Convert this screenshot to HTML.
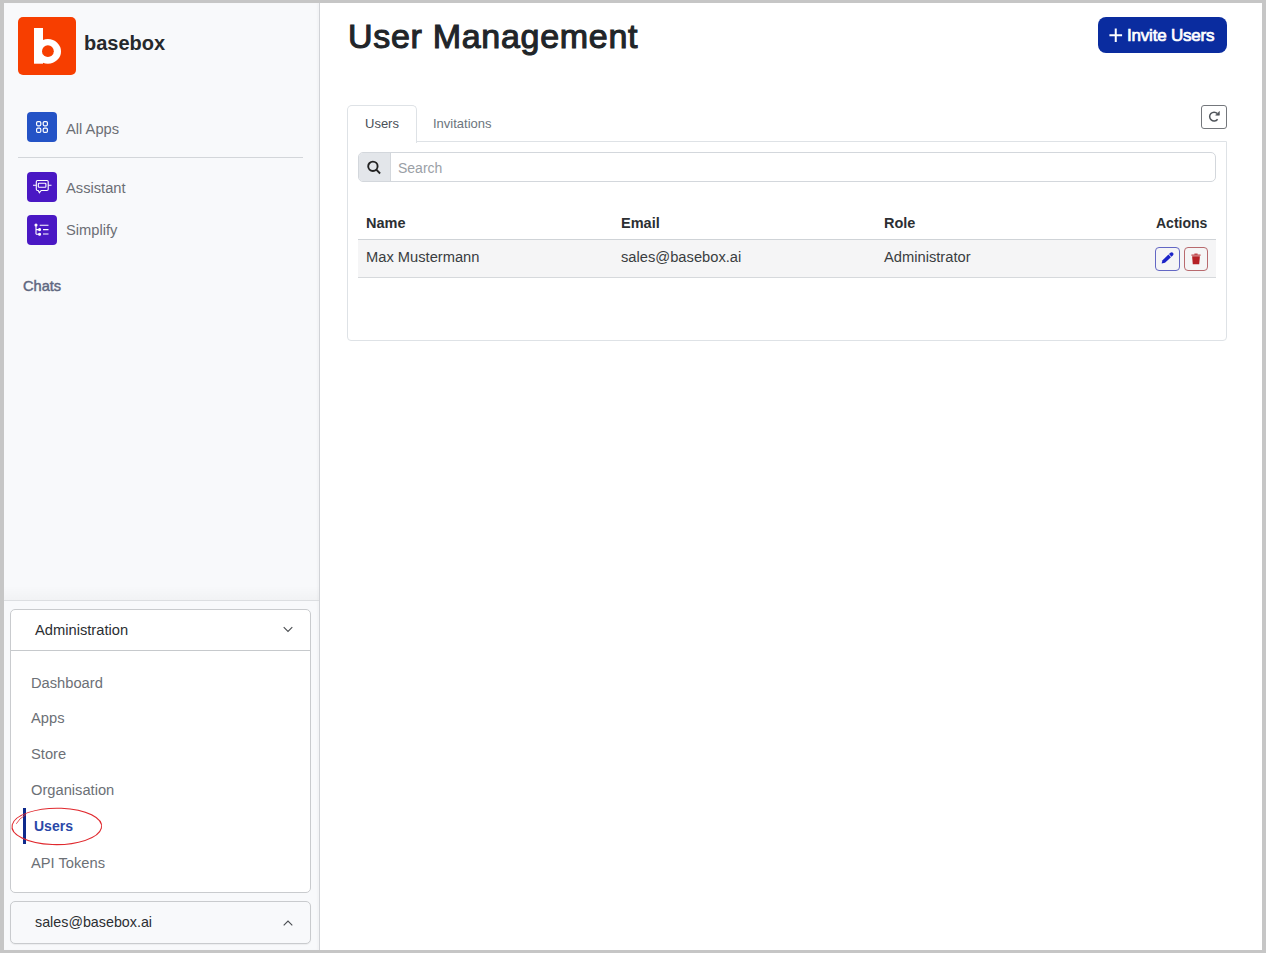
<!DOCTYPE html>
<html><head><meta charset="utf-8">
<style>
*{box-sizing:border-box;margin:0;padding:0}
html,body{width:1266px;height:953px;overflow:hidden;background:#c6c6c6;font-family:"Liberation Sans",sans-serif}
.a{position:absolute}
.t{position:absolute;white-space:nowrap;line-height:1}
#frame{left:4px;top:3px;width:1258px;height:947px;background:#fff}
#side{left:4px;top:3px;width:316px;height:947px;background:#f8f9fb;border-right:1px solid #d1d3d7;box-shadow:inset -2px 0 2px rgba(0,0,0,0.025)}
.logo{left:18px;top:17px;width:58px;height:58px;background:#f73e00;border-radius:5px}
.brand{left:84px;top:33px;font-size:20px;font-weight:700;color:#26292d}
.ai{width:30px;height:30px;border-radius:4px}
.nav{font-size:14.7px;color:#6c6f75}
.box{left:10px;width:301px;border:1px solid #c9cbce;border-radius:5px}
.mi{font-size:14.7px;color:#6c7076}
.title{left:348px;top:19px;font-size:34px;font-weight:400;color:#212529;-webkit-text-stroke:1.1px #212529;letter-spacing:0.7px}
.btn{left:1098px;top:17px;width:129px;height:36px;background:#0a2c9f;border-radius:8px}
.panel{left:347px;top:141px;width:880px;height:200px;border:1px solid #dee2e6;border-radius:0 0 4px 4px}
.th{font-size:14.5px;font-weight:700;color:#2c2f33}
.td{font-size:14.7px;color:#3a3d41}
</style></head><body>
<div class="a" id="frame"></div>
<div class="a" id="side"></div>

<!-- logo -->
<div class="a logo">
 <svg width="58" height="58" viewBox="0 0 58 58" style="position:absolute;left:0;top:0">
  <rect x="16" y="11" width="9" height="35.7" fill="#fff"/>
  <ellipse cx="29.9" cy="34.4" rx="13.1" ry="12.3" fill="#fff"/>
  <circle cx="29.9" cy="34.2" r="5.9" fill="#f73e00"/>
 </svg>
</div>
<div class="t brand">basebox</div>

<!-- app nav -->
<div class="a ai" style="left:27px;top:112px;background:#2453c6">
 <svg width="30" height="30" viewBox="0 0 30 30" fill="none" stroke="#fff" stroke-width="1.2">
  <rect x="9.6" y="9.6" width="4.2" height="4.2" rx="1.2"/><rect x="16.2" y="9.6" width="4.2" height="4.2" rx="1.2"/>
  <rect x="9.6" y="16.2" width="4.2" height="4.2" rx="1.2"/><rect x="16.2" y="16.2" width="4.2" height="4.2" rx="1.2"/>
 </svg>
</div>
<div class="t nav" style="left:66px;top:122px">All Apps</div>
<div class="a" style="left:18px;top:157px;width:285px;height:1px;background:#d3d6da"></div>
<div class="a ai" style="left:27px;top:172px;background:#4a18c4">
 <svg width="30" height="30" viewBox="0 0 30 30" fill="none" stroke="#fff" stroke-width="1.1">
  <path d="M10.5 8.5h9.5a1.2 1.2 0 0 1 1.2 1.2v7.6a1.2 1.2 0 0 1-1.2 1.2h-5.8l-1.8 2.2-1.2-2.2h-0.7a1.2 1.2 0 0 1-1.2-1.2V9.7a1.2 1.2 0 0 1 1.2-1.2z"/>
  <rect x="11.3" y="11.3" width="7.6" height="4" rx="0.8"/>
  <path d="M6 13.3h3.3M21.2 13.3h3.3"/>
 </svg>
</div>
<div class="t nav" style="left:66px;top:181px">Assistant</div>
<div class="a ai" style="left:27px;top:215px;background:#4a18c4">
 <svg width="30" height="30" viewBox="0 0 30 30" fill="none" stroke="#fff" stroke-width="1.1">
  <path d="M9 10v9.3M9 14.6h3.4M9 19.2h3.4"/>
  <circle cx="9" cy="10" r="1" fill="#fff"/><circle cx="12.6" cy="14.6" r="1" fill="#fff"/><circle cx="12.6" cy="19.2" r="1" fill="#fff"/>
  <path d="M12.7 10.3h8.8M16 14.6h5.5M16 19h5.5"/>
 </svg>
</div>
<div class="t nav" style="left:66px;top:223px">Simplify</div>
<div class="t" style="left:23px;top:279px;font-size:14.6px;font-weight:400;color:#5f6780;-webkit-text-stroke:0.45px #5f6780">Chats</div>

<div class="a" style="left:4px;top:586px;width:315px;height:14px;background:linear-gradient(rgba(0,0,0,0),rgba(0,0,0,0.028))"></div>
<div class="a" style="left:4px;top:600px;width:315px;height:1px;background:#dcdee1"></div>

<!-- admin box -->
<div class="a box" style="top:609px;height:284px;background:#fff"></div>
<div class="a" style="left:11px;top:650px;width:299px;height:1px;background:#c6c9cc"></div>
<div class="t" style="left:35px;top:623px;font-size:14.7px;color:#2b2e32">Administration</div>
<svg class="a" style="left:280px;top:622px" width="16" height="14" viewBox="0 0 16 14" fill="none" stroke="#4a4d51" stroke-width="1.1"><path d="M3.7 5.2l4.3 4.3 4.3-4.3"/></svg>
<div class="t mi" style="left:31px;top:676px">Dashboard</div>
<div class="t mi" style="left:31px;top:711px">Apps</div>
<div class="t mi" style="left:31px;top:747px">Store</div>
<div class="t mi" style="left:31px;top:783px">Organisation</div>
<div class="a" style="left:23px;top:808px;width:3px;height:36px;background:#0e2a8c"></div>
<div class="t" style="left:34px;top:819px;font-size:14px;font-weight:700;color:#2a48a8">Users</div>
<div class="t mi" style="left:31px;top:856px">API Tokens</div>
<svg class="a" style="left:0;top:795px" width="120" height="60" viewBox="0 0 120 60" fill="none" stroke="#e0292e" stroke-width="1.05">
 <ellipse cx="56.8" cy="31.4" rx="44.6" ry="18.3" transform="translate(56.8 31.4) rotate(2.2) skewX(-12) translate(-56.8 -31.4)"/>
 <path d="M16.3 28.8Q19 23.5 26 19.6" stroke-width="0.8"/>
</svg>

<!-- account box -->
<div class="a box" style="top:901px;height:43px;background:#f8f9fb;box-shadow:0 1px 1px rgba(0,0,0,0.05)"></div>
<div class="t" style="left:35px;top:915px;font-size:14.3px;color:#2b2e32">sales@basebox.ai</div>
<svg class="a" style="left:280px;top:916px" width="16" height="14" viewBox="0 0 16 14" fill="none" stroke="#4a4d51" stroke-width="1.1"><path d="M3.7 9.3l4.3-4.3 4.3 4.3"/></svg>

<!-- main -->
<div class="t title">User Management</div>
<div class="a btn">
 <svg width="20" height="20" viewBox="0 0 20 20" style="position:absolute;left:7px;top:7px" stroke="#fff" stroke-width="2"><path d="M4.4 11.25h12.7M10.75 4.6v13.3"/></svg>
 <div class="t" style="left:29px;top:10px;font-size:17px;font-weight:400;color:#fff;-webkit-text-stroke:0.7px #fff;letter-spacing:-0.2px">Invite Users</div>
</div>

<div class="a" style="left:1201px;top:105px;width:26px;height:24px;border:1px solid #74777c;border-radius:3px">
 <svg width="24" height="22" viewBox="0 0 24 22" fill="none" stroke="#50555b" stroke-width="1.5" style="position:absolute;left:0;top:0">
  <path d="M15.3 7.6A4.4 4.4 0 1 0 15.6 13.2"/>
  <path d="M17.4 5.4v3.8h-3.8z" fill="#50555b" stroke-width="0.6"/>
 </svg>
</div>

<div class="a panel"></div>
<!-- tabs -->
<div class="a" style="left:347px;top:105px;width:70px;height:38px;background:#fff;border:1px solid #dee2e6;border-bottom:none;border-radius:5px 5px 0 0"></div>
<div class="t" style="left:365px;top:117px;font-size:13px;color:#495057">Users</div>
<div class="t" style="left:433px;top:117px;font-size:13px;color:#6c757d">Invitations</div>

<!-- search -->
<div class="a" style="left:358px;top:152px;width:858px;height:30px;border:1px solid #d3d7dc;border-radius:5px;overflow:hidden">
 <div class="a" style="left:0;top:0;width:32px;height:28px;background:#e3e6ea;border-right:1px solid #d3d7dc"></div>
</div>
<svg class="a" style="left:362px;top:156px" width="24" height="22" viewBox="0 0 24 22" fill="none" stroke="#222" stroke-width="1.9">
 <circle cx="10.9" cy="10.3" r="4.7"/><path d="M14.3 13.7l3.8 3.8"/>
</svg>
<div class="t" style="left:398px;top:161px;font-size:14px;color:#9aa0a6">Search</div>

<!-- table -->
<div class="t th" style="left:366px;top:216px">Name</div>
<div class="t th" style="left:621px;top:216px">Email</div>
<div class="t th" style="left:884px;top:216px">Role</div>
<div class="t th" style="left:1156px;top:216px;font-size:14px">Actions</div>
<div class="a" style="left:358px;top:239px;width:858px;height:1px;background:#cfd3d7"></div>
<div class="a" style="left:358px;top:240px;width:858px;height:37px;background:#f5f5f6"></div>
<div class="a" style="left:358px;top:277px;width:858px;height:1px;background:#d6d9dc"></div>
<div class="t td" style="left:366px;top:250px">Max Mustermann</div>
<div class="t td" style="left:621px;top:250px">sales@basebox.ai</div>
<div class="t td" style="left:884px;top:250px">Administrator</div>

<div class="a" style="left:1155px;top:247px;width:25px;height:24px;border:1px solid #6367c4;border-radius:4px">
 <svg width="23" height="22" viewBox="0 0 23 22" style="position:absolute;left:0;top:0">
  <g transform="translate(5.6 15.6) rotate(-43.5)" fill="#1c24c8">
   <path d="M0 0L3 -1.8H11.2V1.8H3z"/>
   <path d="M11.9 -1.8H13.8A1.8 1.8 0 0 1 13.8 1.8H11.9z"/>
  </g>
 </svg>
</div>
<div class="a" style="left:1184px;top:247px;width:24px;height:24px;border:1px solid #b86a6e;border-radius:4px">
 <svg width="22" height="22" viewBox="0 0 22 22" style="position:absolute;left:0;top:0">
  <path d="M6.4 6.6h9.2v1.1h-9.2z M9.4 5.6h3.2v1h-3.2z" fill="#c04a4e"/>
  <path d="M7.1 8.2h7.8l-0.7 8.1h-6.4z" fill="#b52025"/>
 </svg>
</div>
</body></html>
